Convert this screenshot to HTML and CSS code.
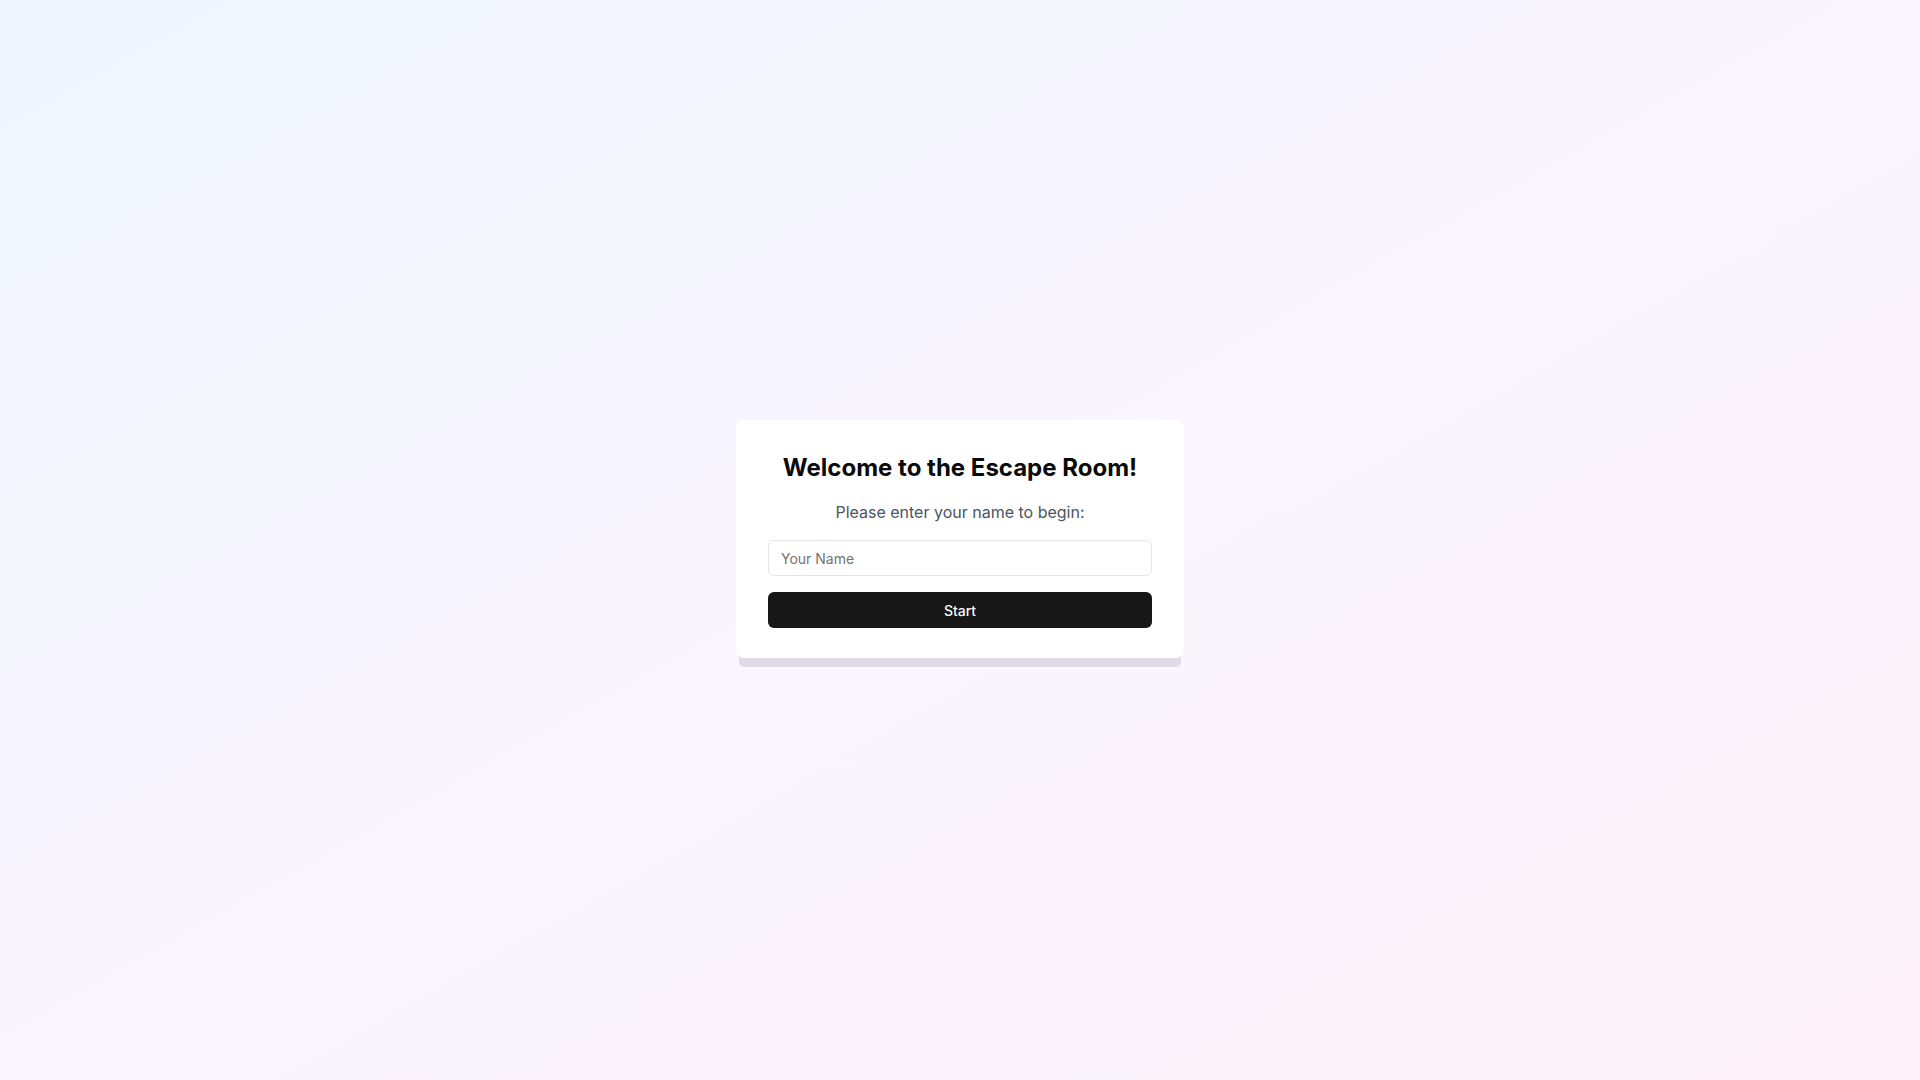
FILE: index.html
```html
<!DOCTYPE html>
<html lang="en">
<head>
<meta charset="utf-8">
<title>Escape Room</title>
<link rel="stylesheet" href="styles.css">
</head>
<body>
<main class="page">
  <div class="card">
    <h1 class="title">Welcome to the Escape Room!</h1>
    <p class="subtitle">Please enter your name to begin:</p>
    <input class="input" type="text" placeholder="Your Name">
    <button class="button" type="button">Start</button>
  </div>
</main>
</body>
</html>
```

FILE: styles.css
```css
* { box-sizing: border-box; }
html, body { margin: 0; padding: 0; height: 100%; }
body {
  font-family: Inter, "Noto Sans", sans-serif;
  background: linear-gradient(to bottom right, #eff6ff, #faf5ff, #fdf2f8);
  min-height: 100vh;
}
.page {
  min-height: 100vh;
  display: flex;
  align-items: center;
  justify-content: center;
}
.card {
  width: 448px;
  background: #ffffff;
  border-radius: 8px;
  padding: 32px 32px 30px;
  display: flex;
  flex-direction: column;
  box-shadow: 0 12px 0 -3px #e0dbe6;
  margin-bottom: 2px;
}
.title {
  margin: 0 0 16px;
  font-size: 24px;
  line-height: 32px;
  font-weight: 700;
  color: #0a0a0a;
  text-align: center;
}
.subtitle {
  margin: 0 0 16px;
  font-size: 16px;
  line-height: 24px;
  color: #4b5563;
  text-align: center;
}
.input {
  height: 36px;
  width: 100%;
  border: 1px solid #e4e4e7;
  border-radius: 6px;
  padding: 0 12px;
  font-family: inherit;
  font-size: 14px;
  color: #0a0a0a;
  background: #fff;
  margin: 0 0 16px;
  outline: none;
}
.input::placeholder { color: #737373; }
.button {
  height: 36px;
  width: 100%;
  border: none;
  border-radius: 6px;
  background: #171717;
  color: #fafafa;
  font-family: inherit;
  font-size: 14px;
  font-weight: 500;
  cursor: pointer;
}
```
